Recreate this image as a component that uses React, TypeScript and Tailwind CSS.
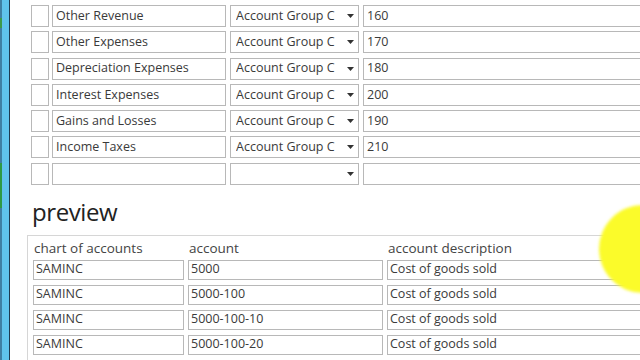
import React from 'react';

const groups = [
  { name: 'Other Revenue', group: 'Account Group C', code: '160' },
  { name: 'Other Expenses', group: 'Account Group C', code: '170' },
  { name: 'Depreciation Expenses', group: 'Account Group C', code: '180' },
  { name: 'Interest Expenses', group: 'Account Group C', code: '200' },
  { name: 'Gains and Losses', group: 'Account Group C', code: '190' },
  { name: 'Income Taxes', group: 'Account Group C', code: '210' },
  { name: '', group: '', code: '' },
];

const preview = [
  { chart: 'SAMINC', account: '5000', desc: 'Cost of goods sold' },
  { chart: 'SAMINC', account: '5000-100', desc: 'Cost of goods sold' },
  { chart: 'SAMINC', account: '5000-100-10', desc: 'Cost of goods sold' },
  { chart: 'SAMINC', account: '5000-100-20', desc: 'Cost of goods sold' },
  { chart: '', account: '', desc: '' },
];

const box = 'border border-[#b8b8b8] bg-white flex items-center overflow-hidden whitespace-nowrap';

const App: React.FC = () => {
  return (
    <div
      className="relative w-[640px] h-[360px] overflow-hidden bg-white flex text-[#3a3a3a]"
      style={{ fontFamily: '"Open Sans", "Noto Sans", sans-serif' }}
    >
      {/* window edge */}
      <div className="w-[10px] h-full flex shrink-0">
        <div className="w-[2px] h-full flex flex-col">
          <div className="h-[18px] bg-[#3f7fa3]" />
          <div className="h-[10px] bg-[#3d9a4a]" />
          <div className="h-[135px] bg-[#3f7fa3]" />
          <div className="h-[45px] bg-[#2f9a45]" />
          <div className="flex-1 bg-[#3f7fa3]" />
        </div>
        <div className="w-[7px] h-full bg-[#5fc3ec]" />
        <div className="w-[1px] h-full bg-[#1d3b52]" />
      </div>

      <div className="flex-1 pl-[17px] min-w-0">
        {/* account group rows */}
        <div className="flex flex-col gap-[4.3px] pt-[5px] pl-[4px] text-[12.5px]">
          {groups.map((g, i) => (
            <div key={i} className="flex items-center h-[22px]">
              <div className={`${box} w-[18px] h-full shrink-0`} />
              <div className={`${box} w-[174px] h-full ml-[3px] pl-[3px] shrink-0`}>{g.name}</div>
              <div className={`${box} w-[129px] h-full ml-[4px] pl-[5px] pr-[4px] shrink-0 justify-between`}>
                <span className="overflow-hidden w-[101px]">{g.group}</span>
                <svg width="7" height="4" viewBox="0 0 7 4" className="shrink-0">
                  <path d="M0 0 L7 0 L3.5 4 Z" fill="#333" />
                </svg>
              </div>
              <div className={`${box} w-[320px] h-full ml-[4px] pl-[3px] shrink-0`}>{g.code}</div>
            </div>
          ))}
        </div>

        <h2 className="text-[24px] leading-none text-[#222] mt-[15px] ml-[5px] tracking-[-0.4px]">preview</h2>

        {/* preview grid */}
        <div className="mt-[11px] border-t border-l border-[#d6d6d6] pl-[5px] pt-[2px] w-[640px]">
          <div className="flex text-[13.5px] text-[#444] h-[20px] items-center">
            <div className="w-[155px] pl-[1px]">chart of accounts</div>
            <div className="w-[199px] pl-[1px]">account</div>
            <div className="pl-[1px]">account description</div>
          </div>
          <div className="flex flex-col gap-[5px] mt-[2px] text-[12.5px]">
            {preview.map((p, i) => (
              <div key={i} className="flex h-[20px]">
                <div className={`${box} w-[151px] h-full pl-[2px] shrink-0`}>{p.chart}</div>
                <div className={`${box} w-[195px] h-full ml-[4px] pl-[2px] shrink-0`}>{p.account}</div>
                <div className={`${box} w-[300px] h-full ml-[4px] pl-[2px] shrink-0`}>{p.desc}</div>
              </div>
            ))}
          </div>
        </div>
      </div>

      {/* cursor highlight */}
      <div className="absolute left-[599px] top-[205px] w-[88px] h-[88px] rounded-full bg-[#fbfb2a] blur-[1.5px]" />
    </div>
  );
};

export default App;
